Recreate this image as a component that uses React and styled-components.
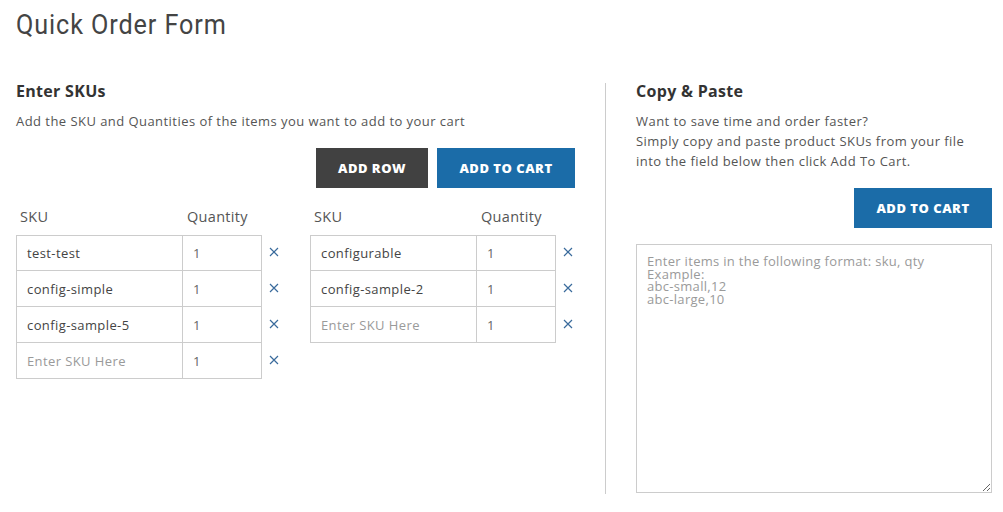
import React from "react";
import styled, { createGlobalStyle } from "styled-components";

const Global = createGlobalStyle`
  html, body { margin: 0; padding: 0; background: #fff; }
  body { font-family: "Open Sans", "Noto Sans", sans-serif; color: #555; }
  * { box-sizing: border-box; }
`;

const Page = styled.div`
  width: 1003px;
  height: 512px;
  padding: 0 11px 0 16px;
  overflow: hidden;
`;

const Title = styled.h1`
  margin: 0;
  padding-top: 9px;
  height: 83px;
  font-family: Roboto, "Liberation Sans", sans-serif;
  font-weight: 400;
  font-size: 28px;
  line-height: 32px;
  color: #444;
`;

const TitleText = styled.span`
  display: inline-block;
  letter-spacing: 1px;
  transform: scaleX(0.9);
  transform-origin: left center;
`;

const Columns = styled.div`
  display: grid;
  grid-template-columns: 589px 1fr;
`;

const LeftCol = styled.section`
  padding-right: 30px;
`;

const RightCol = styled.section`
  border-left: 1px solid #ccc;
  padding-left: 30px;
  height: 411px;
`;

const Heading = styled.h2`
  margin: 0;
  font-size: 16px;
  font-weight: 700;
  letter-spacing: 0.3px;
  line-height: 16px;
  color: #333;
`;

const Text = styled.p`
  margin: 12px 0 0;
  font-size: 13px;
  line-height: 20px;
  letter-spacing: 0.45px;
  color: #555;
`;

const ButtonRow = styled.div`
  display: flex;
  justify-content: flex-end;
  gap: 9px;
  margin-top: 17px;
`;

const Button = styled.button`
  height: 40px;
  padding: 0;
  width: ${(p) => p.$w}px;
  border: none;
  background: ${(p) => (p.$dark ? "#414141" : "#1b6ca8")};
  color: #fff;
  font-family: "Open Sans", sans-serif;
  font-weight: 800;
  font-size: 13px;
  letter-spacing: 0.5px;
  text-transform: uppercase;
`;

const Tables = styled.div`
  display: flex;
  margin-top: 20px;
`;

const Group = styled.div`
  display: grid;
  grid-template-columns: 167px 79px 48px;
  grid-template-rows: 27px;
  grid-auto-rows: 36px;
`;

const HeadCell = styled.div`
  padding-left: 4px;
  font-size: 14.5px;
  line-height: 18px;
  letter-spacing: 0.3px;
  color: #555;
`;

const Cell = styled.div`
  border: 1px solid #ccc;
  border-top: ${(p) => (p.$first ? "1px solid #ccc" : "none")};
  border-left: ${(p) => (p.$qty ? "none" : "1px solid #ccc")};
  height: 36px;
  margin-top: ${(p) => (p.$first ? "0" : "0")};
  display: flex;
  align-items: center;
  padding-left: ${(p) => (p.$qty ? "10px" : "10px")};
  font-size: 13px;
  letter-spacing: 0.4px;
  color: ${(p) => (p.$ph ? "#9a9a9a" : p.$qty ? "#666" : "#444")};
`;

const Remove = styled.div`
  display: flex;
  align-items: flex-start;
  padding: 12px 0 0 7px;
`;

const TextArea = styled.textarea`
  display: block;
  margin-top: 16px;
  width: 356px;
  height: 249px;
  border: 1px solid #ccc;
  padding: 10px 10px;
  font-family: "Open Sans", sans-serif;
  font-size: 13px;
  line-height: 12.5px;
  letter-spacing: 0.3px;
  color: #444;
  resize: both;
  outline: none;
  &::placeholder { color: #9a9a9a; }
`;

const X = () => (
  <svg width="10" height="10" viewBox="0 0 10 10">
    <path d="M1 1L9 9M9 1L1 9" stroke="#3a6b9c" strokeWidth="1.2" />
  </svg>
);

const Table = ({ rows }) => (
  <Group>
    <HeadCell>SKU</HeadCell>
    <HeadCell>Quantity</HeadCell>
    <div />
    {rows.map((r, i) => (
      <React.Fragment key={i}>
        <Cell $first={i === 0} $ph={!r}>{r || "Enter SKU Here"}</Cell>
        <Cell $first={i === 0} $qty>1</Cell>
        <Remove><X /></Remove>
      </React.Fragment>
    ))}
  </Group>
);

export default function App() {
  return (
    <Page>
      <Global />
      <Title><TitleText>Quick Order Form</TitleText></Title>
      <Columns>
        <LeftCol>
          <Heading>Enter SKUs</Heading>
          <Text>Add the SKU and Quantities of the items you want to add to your cart</Text>
          <ButtonRow>
            <Button $dark $w={112}>Add Row</Button>
            <Button $w={138}>Add to Cart</Button>
          </ButtonRow>
          <Tables>
            <Table rows={["test-test", "config-simple", "config-sample-5", ""]} />
            <Table rows={["configurable", "config-sample-2", ""]} />
          </Tables>
        </LeftCol>
        <RightCol>
          <Heading>Copy &amp; Paste</Heading>
          <Text>
            Want to save time and order faster?
            <br />
            Simply copy and paste product SKUs from your file
            <br />
            into the field below then click Add To Cart.
          </Text>
          <ButtonRow>
            <Button $w={138}>Add to Cart</Button>
          </ButtonRow>
          <TextArea
            placeholder={"Enter items in the following format: sku, qty\nExample:\nabc-small,12\nabc-large,10"}
          />
        </RightCol>
      </Columns>
    </Page>
  );
}
